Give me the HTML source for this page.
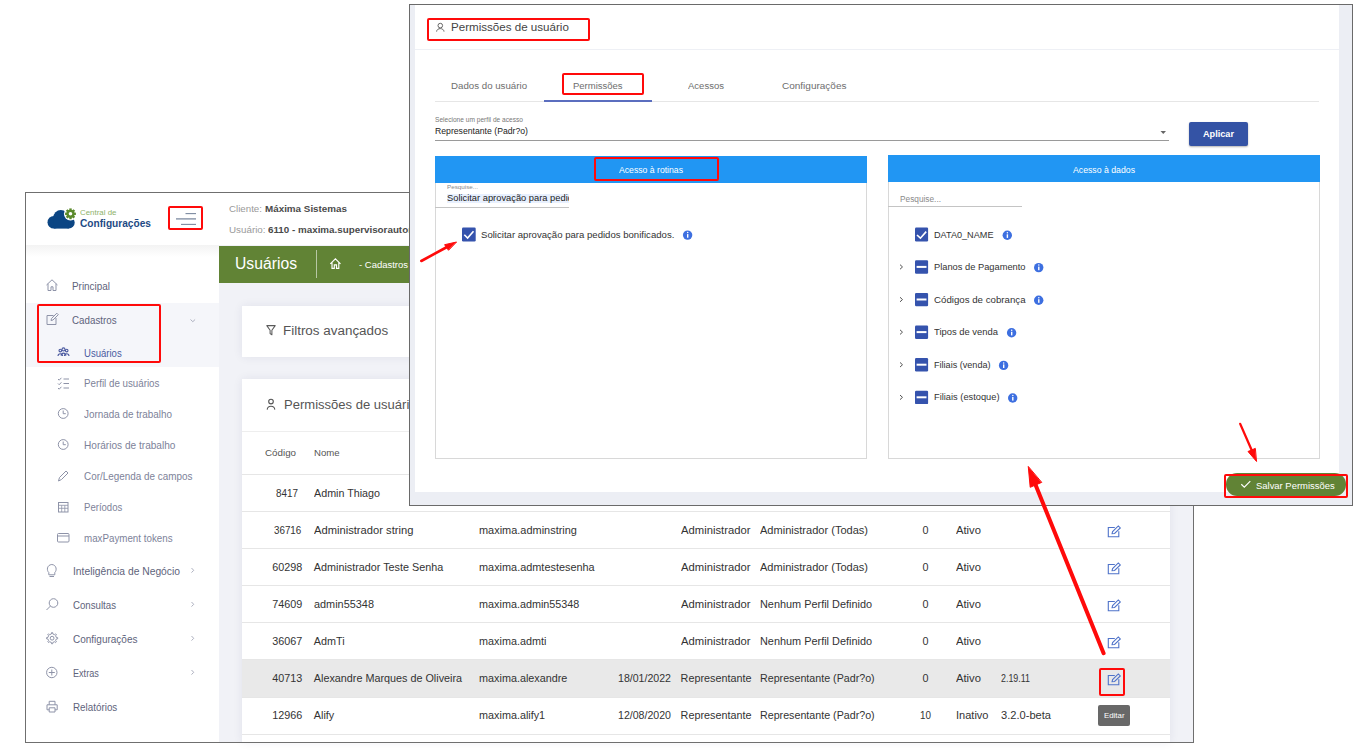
<!DOCTYPE html>
<html><head><meta charset="utf-8"><style>
*{margin:0;padding:0;box-sizing:border-box}
html,body{width:1362px;height:752px;overflow:hidden;background:#fff;font-family:"Liberation Sans",sans-serif}
.a{position:absolute}
.tx{position:absolute;white-space:nowrap;line-height:normal;transform-origin:0 0;font-family:"Liberation Sans",sans-serif}
.red{position:absolute;border:2.9px solid #ff0a0a;border-radius:2px}
svg{position:absolute;overflow:visible}
</style></head><body>
<!-- ================= BACK APP ================= -->
<div class="a" style="left:25px;top:192px;width:1169px;height:551px;border:1px solid #6f6f6f;background:#fff;overflow:hidden">
</div>
<!-- sidebar shadow -->
<div class="a" style="left:26px;top:245px;width:193px;height:12px;background:linear-gradient(#f3f3f3,#fff)"></div>
<div class="a" style="left:26px;top:302.5px;width:193px;height:64.5px;background:#f5f6fa"></div>
<!-- content bg -->
<div class="a" style="left:219px;top:245px;width:974px;height:497px;background:#f1f2f7"></div>
<!-- green header -->
<div class="a" style="left:219px;top:245.7px;width:974px;height:37px;background:#618335"></div>
<div class="a" style="left:316px;top:249.5px;width:1px;height:28.5px;background:rgba(255,255,255,.55)"></div>
<!-- cards -->
<div class="a" style="left:242px;top:305.7px;width:928px;height:51px;background:#fff;box-shadow:0 0 9px rgba(40,40,90,.08)"></div>
<div class="a" style="left:242px;top:379.4px;width:928px;height:363px;background:#fff;box-shadow:0 0 9px rgba(40,40,90,.08)"></div>
<div class="a" style="left:242px;top:430.5px;width:928px;height:1px;background:#eeeeee"></div>
<div class="a" style="left:242px;top:660px;width:928px;height:37px;background:#e9e9e9"></div>
<div id="rowlines"></div>
<div class="a" style="left:242px;top:473.9px;width:928px;height:1px;background:#e6e6e6"></div>
<div class="a" style="left:242px;top:510.8px;width:928px;height:1px;background:#e6e6e6"></div>
<div class="a" style="left:242px;top:547.9px;width:928px;height:1px;background:#e6e6e6"></div>
<div class="a" style="left:242px;top:584.8px;width:928px;height:1px;background:#e6e6e6"></div>
<div class="a" style="left:242px;top:621.8px;width:928px;height:1px;background:#e6e6e6"></div>
<div class="a" style="left:242px;top:658.9px;width:928px;height:1px;background:#e6e6e6"></div>
<div class="a" style="left:242px;top:696.5px;width:928px;height:1px;background:#e6e6e6"></div>
<div class="a" style="left:242px;top:734.2px;width:928px;height:1px;background:#e6e6e6"></div>

<!-- bottom border re-draw -->
<div class="a" style="left:25px;top:742px;width:1169px;height:1px;background:#6f6f6f"></div>
<div class="a" style="left:1193px;top:192px;width:1px;height:551px;background:#6f6f6f"></div>

<!-- logo -->
<svg style="left:0;top:0" width="1362" height="752">
  <g fill="#0b4583">
    <circle cx="53.8" cy="222.3" r="6.3"/><circle cx="60.8" cy="217.6" r="7.5"/><circle cx="68.8" cy="222.7" r="5.9"/>
    <rect x="53.8" y="218" width="15" height="10.6"/>
  </g>
  <g transform="translate(70.5 213.8)">
    <circle r="6.6" fill="#fff"/>
    <circle r="4.1" fill="#5b8a2b"/>
    <g fill="#5b8a2b">
      <rect x="-1.2" y="-5.4" width="2.4" height="10.8"/>
      <rect x="-1.2" y="-5.4" width="2.4" height="10.8" transform="rotate(45)"/>
      <rect x="-1.2" y="-5.4" width="2.4" height="10.8" transform="rotate(90)"/>
      <rect x="-1.2" y="-5.4" width="2.4" height="10.8" transform="rotate(135)"/>
    </g>
    <circle r="1.8" fill="#fff"/>
  </g>
  <!-- hamburger -->
  <g stroke="#7c8aa0" stroke-width="1.1">
    <line x1="185.5" y1="213.6" x2="196" y2="213.6"/>
    <line x1="176" y1="218.9" x2="196" y2="218.9" stroke-width="1.3"/>
    <line x1="181" y1="224.4" x2="196" y2="224.4"/>
  </g>
  <!-- sidebar icons -->
  <g fill="none" stroke="#8e93a8" stroke-width="1">
    <!-- home -->
    <path d="M46.5 285 L52 279.8 L57.5 285 M48 283.8 V290.5 H51 V286.8 H53 V290.5 H56 V283.8"/>
    <!-- edit -->
    <path d="M53.5 315.5 H47 V324.5 H56 V318"/>
    <path d="M51 320.5 L51.5 318.5 L56.8 313.2 L58.3 314.7 L53 320 Z"/>
    <!-- checklist -->
    <path d="M58 379 l1.2 1.2 l2.2 -2.4 M58 383.5 l1.2 1.2 l2.2 -2.4 M58 388 l1.2 1.2 l2.2 -2.4 M63.5 379 H69 M63.5 383.5 H69 M63.5 388 H69"/>
    <!-- clocks -->
    <circle cx="63.2" cy="413.5" r="4.9"/><path d="M63.2 410.5 V413.7 H65.8"/>
    <circle cx="63.2" cy="444.5" r="4.9"/><path d="M63.2 441.5 V444.7 H65.8"/>
    <!-- pencil -->
    <path d="M58.5 481 L59.5 477.5 L66 471 L68 473 L61.5 479.5 Z"/>
    <!-- calendar -->
    <rect x="58.5" y="502.5" width="9.5" height="9.5"/>
    <path d="M58.5 505.3 H68 M58.5 508.3 H68 M61.7 505.3 V512 M64.8 505.3 V512" stroke-width=".8"/>
    <!-- card -->
    <rect x="57.5" y="533.5" width="11.5" height="8.5" rx="1"/>
    <path d="M57.5 536 H69"/>
    <!-- bulb -->
    <path d="M48.8 572.5 C46.5 570.5 46.7 565 51.8 564.5 C56.8 565 57 570.5 54.8 572.5 V574.8 H48.8 Z M49.5 576.5 H54"/>
    <!-- search -->
    <circle cx="53.5" cy="603" r="4.3"/><path d="M50.5 606 L46.5 610"/>
    <!-- gear -->
    <circle cx="52.1" cy="638.2" r="1.9"/>
    <path d="M56.34 637.46 L57.68 637.67 L57.68 638.73 L56.34 638.94 L55.62 640.67 L56.41 641.77 L55.67 642.51 L54.57 641.72 L52.84 642.44 L52.63 643.78 L51.57 643.78 L51.36 642.44 L49.63 641.72 L48.53 642.51 L47.79 641.77 L48.58 640.67 L47.86 638.94 L46.52 638.73 L46.52 637.67 L47.86 637.46 L48.58 635.73 L47.79 634.63 L48.53 633.89 L49.63 634.68 L51.36 633.96 L51.57 632.62 L52.63 632.62 L52.84 633.96 L54.57 634.68 L55.67 633.89 L56.41 634.63 L55.62 635.73 Z"/>
    <!-- plus circle -->
    <circle cx="51.8" cy="672.5" r="5.2"/><path d="M51.8 669.5 V675.5 M48.8 672.5 H54.8"/>
    <!-- printer -->
    <path d="M49.2 704.8 V701.3 H55 V704.8 M49.2 709.8 H47 V704.8 H57.2 V709.8 H55 M49.2 707.8 H55 V712 H49.2 Z"/>
    <!-- chevrons -->
    <path d="M190.5 319.5 l2.3 2.2 2.3 -2.2" stroke="#aeb1c0"/>
    <path d="M191.5 568 l2.2 2.3 -2.2 2.3 M191.5 602 l2.2 2.3 -2.2 2.3 M191.5 636 l2.2 2.3 -2.2 2.3 M191.5 670 l2.2 2.3 -2.2 2.3" stroke="#aeb1c0"/>
  </g>
  <!-- users icon -->
  <g fill="none" stroke="#4b5aa0" stroke-width="1.1">
    <circle cx="60.3" cy="350.6" r="1.3"/><circle cx="63.5" cy="349.4" r="1.5"/><circle cx="66.7" cy="350.6" r="1.3"/>
    <path d="M58 356 C58.2 353 62.4 353 62.6 356 M61.2 355.8 C61.4 352.2 65.6 352.2 65.8 355.8 M64.4 356 C64.6 353 68.8 353 69 356"/>
  </g>
  <!-- header icons -->
  <path d="M330.3 263.8 L335.4 258.8 L340.5 263.8 M332 262.3 V268.4 H334.3 V264.8 H336.5 V268.4 H338.8 V262.3" fill="none" stroke="#fff" stroke-width="1.15"/>
  <!-- filter icon -->
  <path d="M266.8 325.6 H275.2 L271.9 330.2 V334.8 L270.1 333.6 V330.2 Z" fill="none" stroke="#5a5a5a" stroke-width="1.05" stroke-linejoin="round"/>
  <!-- user icon card -->
  <g fill="none" stroke="#555" stroke-width="1.1">
    <circle cx="271" cy="401.6" r="2.3"/><path d="M267.2 409.6 C267.6 405.2 274.4 405.2 274.8 409.6"/>
  </g>
</svg>
<svg style="left:0;top:0" width="1362" height="752"><g fill="none" stroke="#4f73c9" stroke-width="1.1"><path d="M1114.8 527.5 H1108.3 V536.7 H1118.8 V531.2"/><path d="M1112.1 533.7 L1112.6 531.5 L1118.3 525.9000000000001 L1120.3 527.9000000000001 L1114.6 533.5 Z"/><path d="M1114.8 564.5 H1108.3 V573.7 H1118.8 V568.2"/><path d="M1112.1 570.7 L1112.6 568.5 L1118.3 562.9000000000001 L1120.3 564.9000000000001 L1114.6 570.5 Z"/><path d="M1114.8 601.5 H1108.3 V610.7 H1118.8 V605.2"/><path d="M1112.1 607.7 L1112.6 605.5 L1118.3 599.9000000000001 L1120.3 601.9000000000001 L1114.6 607.5 Z"/><path d="M1114.8 638.5 H1108.3 V647.7 H1118.8 V642.2"/><path d="M1112.1 644.7 L1112.6 642.5 L1118.3 636.9000000000001 L1120.3 638.9000000000001 L1114.6 644.5 Z"/><path d="M1114.8 675.5 H1108.3 V684.7 H1118.8 V679.2"/><path d="M1112.1 681.7 L1112.6 679.5 L1118.3 673.9000000000001 L1120.3 675.9000000000001 L1114.6 681.5 Z"/><path d="M1114.8 712.5 H1108.3 V721.7 H1118.8 V716.2"/><path d="M1112.1 718.7 L1112.6 716.5 L1118.3 710.9000000000001 L1120.3 712.9000000000001 L1114.6 718.5 Z"/></g></svg>
<!-- tooltip -->
<div class="a" style="left:1097.7px;top:705.2px;width:32.8px;height:20.4px;background:#686868;border-radius:2px"></div>

<span class="tx" style="left:80.00px;top:208.45px;font-size:7.9px;color:#8db26a;font-weight:400;">Central de</span>
<span class="tx" style="left:80.00px;top:216.83px;font-size:10.8px;color:#1d4a84;font-weight:700;transform:scaleX(0.939);">Configurações</span>
<span class="tx" style="left:229.20px;top:204.45px;font-size:9px;color:#9a9a9a;font-weight:400;transform:scaleX(1.081);">Cliente:</span>
<span class="tx" style="left:265.00px;top:204.45px;font-size:9px;color:#4a4a4a;font-weight:700;transform:scaleX(1.093);">Máxima Sistemas</span>
<span class="tx" style="left:229.20px;top:224.55px;font-size:9px;color:#9a9a9a;font-weight:400;transform:scaleX(1.089);">Usuário:</span>
<span class="tx" style="left:268.20px;top:224.55px;font-size:9px;color:#4a4a4a;font-weight:700;transform:scaleX(1.090);">6110 - maxima.supervisorautomatico</span>
<span class="tx" style="left:234.80px;top:255.08px;font-size:15.6px;color:#ffffff;font-weight:400;transform:scaleX(1.008);">Usuários</span>
<span class="tx" style="left:358.90px;top:259.11px;font-size:9.6px;color:#ffffff;font-weight:400;transform:scaleX(0.988);">- Cadastros</span>
<span class="tx" style="left:72.10px;top:280.30px;font-size:10.5px;color:#5e637b;font-weight:400;transform:scaleX(0.943);">Principal</span>
<span class="tx" style="left:72.00px;top:314.40px;font-size:10.5px;color:#5e637b;font-weight:400;transform:scaleX(0.932);">Cadastros</span>
<span class="tx" style="left:83.80px;top:347.00px;font-size:10.5px;color:#4b5aa0;font-weight:400;transform:scaleX(0.910);">Usuários</span>
<span class="tx" style="left:83.60px;top:378.08px;font-size:10.3px;color:#7d8299;font-weight:400;transform:scaleX(0.948);">Perfil de usuários</span>
<span class="tx" style="left:83.60px;top:408.98px;font-size:10.3px;color:#7d8299;font-weight:400;transform:scaleX(0.961);">Jornada de trabalho</span>
<span class="tx" style="left:83.60px;top:439.88px;font-size:10.3px;color:#7d8299;font-weight:400;transform:scaleX(0.980);">Horários de trabalho</span>
<span class="tx" style="left:83.60px;top:470.78px;font-size:10.3px;color:#7d8299;font-weight:400;transform:scaleX(0.961);">Cor/Legenda de campos</span>
<span class="tx" style="left:83.60px;top:501.68px;font-size:10.3px;color:#7d8299;font-weight:400;transform:scaleX(0.929);">Períodos</span>
<span class="tx" style="left:83.60px;top:532.58px;font-size:10.3px;color:#7d8299;font-weight:400;transform:scaleX(0.949);">maxPayment tokens</span>
<span class="tx" style="left:72.50px;top:564.70px;font-size:10.5px;color:#5e637b;font-weight:400;transform:scaleX(0.980);">Inteligência de Negócio</span>
<span class="tx" style="left:72.50px;top:598.70px;font-size:10.5px;color:#5e637b;font-weight:400;transform:scaleX(0.921);">Consultas</span>
<span class="tx" style="left:72.50px;top:632.70px;font-size:10.5px;color:#5e637b;font-weight:400;transform:scaleX(0.952);">Configurações</span>
<span class="tx" style="left:72.50px;top:666.70px;font-size:10.5px;color:#5e637b;font-weight:400;transform:scaleX(0.867);">Extras</span>
<span class="tx" style="left:72.50px;top:700.70px;font-size:10.5px;color:#5e637b;font-weight:400;transform:scaleX(0.937);">Relatórios</span>
<span class="tx" style="left:283.20px;top:322.60px;font-size:13.7px;color:#555555;font-weight:400;transform:scaleX(0.981);">Filtros avançados</span>
<span class="tx" style="left:283.60px;top:397.10px;font-size:13.7px;color:#555555;font-weight:400;transform:scaleX(0.952);">Permissões de usuário</span>
<span class="tx" style="left:265.00px;top:446.51px;font-size:9.6px;color:#555555;font-weight:400;transform:scaleX(1.020);">Código</span>
<span class="tx" style="left:314.00px;top:446.51px;font-size:9.6px;color:#555555;font-weight:400;">Nome</span>
<span class="tx" style="left:276.20px;top:487.23px;font-size:10.8px;color:#333333;font-weight:400;transform:scaleX(0.915);">8417</span>
<span class="tx" style="left:313.80px;top:487.23px;font-size:10.8px;color:#333333;font-weight:400;transform:scaleX(0.994);">Admin Thiago</span>
<span class="tx" style="left:273.55px;top:524.23px;font-size:10.8px;color:#333333;font-weight:400;transform:scaleX(0.909);">36716</span>
<span class="tx" style="left:313.80px;top:524.23px;font-size:10.8px;color:#333333;font-weight:400;transform:scaleX(1.035);">Administrador string</span>
<span class="tx" style="left:479.10px;top:524.23px;font-size:10.8px;color:#333333;font-weight:400;transform:scaleX(1.014);">maxima.adminstring</span>
<span class="tx" style="left:680.60px;top:524.23px;font-size:10.8px;color:#333333;font-weight:400;transform:scaleX(1.042);">Administrador</span>
<span class="tx" style="left:760.10px;top:524.23px;font-size:10.8px;color:#333333;font-weight:400;transform:scaleX(1.023);">Administrador (Todas)</span>
<span class="tx" style="left:922.49px;top:524.23px;font-size:10.8px;color:#333333;font-weight:400;">0</span>
<span class="tx" style="left:955.60px;top:524.23px;font-size:10.8px;color:#333333;font-weight:400;transform:scaleX(1.041);">Ativo</span>
<span class="tx" style="left:272.20px;top:561.23px;font-size:10.8px;color:#333333;font-weight:400;">60298</span>
<span class="tx" style="left:313.80px;top:561.23px;font-size:10.8px;color:#333333;font-weight:400;">Administrador Teste Senha</span>
<span class="tx" style="left:479.10px;top:561.23px;font-size:10.8px;color:#333333;font-weight:400;transform:scaleX(1.009);">maxima.admtestesenha</span>
<span class="tx" style="left:680.60px;top:561.23px;font-size:10.8px;color:#333333;font-weight:400;transform:scaleX(1.042);">Administrador</span>
<span class="tx" style="left:760.10px;top:561.23px;font-size:10.8px;color:#333333;font-weight:400;transform:scaleX(1.023);">Administrador (Todas)</span>
<span class="tx" style="left:922.49px;top:561.23px;font-size:10.8px;color:#333333;font-weight:400;">0</span>
<span class="tx" style="left:955.60px;top:561.23px;font-size:10.8px;color:#333333;font-weight:400;transform:scaleX(1.041);">Ativo</span>
<span class="tx" style="left:272.18px;top:598.23px;font-size:10.8px;color:#333333;font-weight:400;">74609</span>
<span class="tx" style="left:313.80px;top:598.23px;font-size:10.8px;color:#333333;font-weight:400;transform:scaleX(1.009);">admin55348</span>
<span class="tx" style="left:479.10px;top:598.23px;font-size:10.8px;color:#333333;font-weight:400;">maxima.admin55348</span>
<span class="tx" style="left:680.60px;top:598.23px;font-size:10.8px;color:#333333;font-weight:400;transform:scaleX(1.042);">Administrador</span>
<span class="tx" style="left:760.10px;top:598.23px;font-size:10.8px;color:#333333;font-weight:400;transform:scaleX(1.009);">Nenhum Perfil Definido</span>
<span class="tx" style="left:922.49px;top:598.23px;font-size:10.8px;color:#333333;font-weight:400;">0</span>
<span class="tx" style="left:955.60px;top:598.23px;font-size:10.8px;color:#333333;font-weight:400;transform:scaleX(1.041);">Ativo</span>
<span class="tx" style="left:272.18px;top:635.23px;font-size:10.8px;color:#333333;font-weight:400;">36067</span>
<span class="tx" style="left:313.80px;top:635.23px;font-size:10.8px;color:#333333;font-weight:400;">AdmTi</span>
<span class="tx" style="left:479.10px;top:635.23px;font-size:10.8px;color:#333333;font-weight:400;">maxima.admti</span>
<span class="tx" style="left:680.60px;top:635.23px;font-size:10.8px;color:#333333;font-weight:400;transform:scaleX(1.042);">Administrador</span>
<span class="tx" style="left:760.10px;top:635.23px;font-size:10.8px;color:#333333;font-weight:400;transform:scaleX(1.009);">Nenhum Perfil Definido</span>
<span class="tx" style="left:922.49px;top:635.23px;font-size:10.8px;color:#333333;font-weight:400;">0</span>
<span class="tx" style="left:955.60px;top:635.23px;font-size:10.8px;color:#333333;font-weight:400;transform:scaleX(1.041);">Ativo</span>
<span class="tx" style="left:272.18px;top:672.23px;font-size:10.8px;color:#333333;font-weight:400;">40713</span>
<span class="tx" style="left:313.80px;top:672.23px;font-size:10.8px;color:#333333;font-weight:400;">Alexandre Marques de Oliveira</span>
<span class="tx" style="left:479.10px;top:672.23px;font-size:10.8px;color:#333333;font-weight:400;">maxima.alexandre</span>
<span class="tx" style="left:617.50px;top:672.23px;font-size:10.8px;color:#333333;font-weight:400;transform:scaleX(0.981);">18/01/2022</span>
<span class="tx" style="left:680.60px;top:672.23px;font-size:10.8px;color:#333333;font-weight:400;">Representante</span>
<span class="tx" style="left:760.10px;top:672.23px;font-size:10.8px;color:#333333;font-weight:400;transform:scaleX(0.990);">Representante (Padr?o)</span>
<span class="tx" style="left:922.49px;top:672.23px;font-size:10.8px;color:#333333;font-weight:400;">0</span>
<span class="tx" style="left:955.60px;top:672.23px;font-size:10.8px;color:#333333;font-weight:400;transform:scaleX(1.041);">Ativo</span>
<span class="tx" style="left:1000.80px;top:672.23px;font-size:10.8px;color:#333333;font-weight:400;transform:scaleX(0.823);">2.19.11</span>
<span class="tx" style="left:272.18px;top:709.23px;font-size:10.8px;color:#333333;font-weight:400;">12966</span>
<span class="tx" style="left:313.80px;top:709.23px;font-size:10.8px;color:#333333;font-weight:400;">Alify</span>
<span class="tx" style="left:479.10px;top:709.23px;font-size:10.8px;color:#333333;font-weight:400;">maxima.alify1</span>
<span class="tx" style="left:617.50px;top:709.23px;font-size:10.8px;color:#333333;font-weight:400;transform:scaleX(0.981);">12/08/2020</span>
<span class="tx" style="left:680.60px;top:709.23px;font-size:10.8px;color:#333333;font-weight:400;">Representante</span>
<span class="tx" style="left:760.10px;top:709.23px;font-size:10.8px;color:#333333;font-weight:400;transform:scaleX(0.990);">Representante (Padr?o)</span>
<span class="tx" style="left:920.00px;top:709.23px;font-size:10.8px;color:#333333;font-weight:400;transform:scaleX(0.915);">10</span>
<span class="tx" style="left:955.60px;top:709.23px;font-size:10.8px;color:#333333;font-weight:400;transform:scaleX(1.022);">Inativo</span>
<span class="tx" style="left:1000.80px;top:709.23px;font-size:10.8px;color:#333333;font-weight:400;transform:scaleX(1.028);">3.2.0-beta</span>
<span class="tx" style="left:1103.75px;top:711.05px;font-size:7.9px;color:#ffffff;font-weight:400;transform:scaleX(0.994);">Editar</span>
<!-- ================= MODAL ================= -->
<div class="a" style="left:409px;top:4px;width:944px;height:502px;border:1px solid #6a6a6a;background:#eceef4"></div>
<div class="a" style="left:415px;top:5px;width:924px;height:487px;background:#fff"></div>
<div class="a" style="left:415px;top:49px;width:924px;height:1px;background:#eef0f5"></div>
<!-- tabs underline -->
<div class="a" style="left:434.7px;top:101.2px;width:884.5px;height:1px;background:#e6e6e6"></div>
<div class="a" style="left:543.6px;top:99.8px;width:108px;height:2px;background:#5b6ebf"></div>
<!-- select underline -->
<div class="a" style="left:434.7px;top:140px;width:734px;height:1px;background:#9a9a9a"></div>
<svg style="left:0;top:0" width="1362" height="752">
  <path d="M1160.5 131 H1166 L1163.25 134 Z" fill="#666"/>
</svg>
<div class="a" style="left:1189.2px;top:121.5px;width:59px;height:24.5px;background:#3453a5;border-radius:2px;box-shadow:0 1px 2px rgba(0,0,0,.3)"></div>
<!-- panels -->
<div class="a" style="left:434.5px;top:155.5px;width:432px;height:303.5px;border:1px solid #d8d8d8;background:#fff"></div>
<div class="a" style="left:434.5px;top:155.5px;width:432px;height:27px;background:#2196f3"></div>
<div class="a" style="left:887.5px;top:155.2px;width:432.2px;height:304px;border:1px solid #d8d8d8;background:#fff"></div>
<div class="a" style="left:887.5px;top:155.2px;width:432.2px;height:27px;background:#2196f3"></div>
<!-- left search -->
<div class="a" style="left:447px;top:193.7px;width:122.3px;height:9.5px;background:#e8f0fe"></div>
<div class="a" style="left:435px;top:206.5px;width:134.3px;height:1px;background:#c4c4c4"></div>
<div class="a" style="left:888px;top:206.2px;width:133.7px;height:1px;background:#c4c4c4"></div>
<!-- checkboxes -->
<svg style="left:0;top:0" width="1362" height="752">
  <rect x="462" y="227.5" width="13.7" height="13.9" rx="1.2" fill="#3553ad"/>
  <path d="M464.3 234.8 L467.6 238 L473.5 231.3" fill="none" stroke="#fff" stroke-width="1.6"/>
  <rect x="915" y="227.6" width="13.1" height="13.8" rx="1.2" fill="#3553ad"/>
  <path d="M917 235 L920.4 238.2 L926.2 231.6" fill="none" stroke="#fff" stroke-width="1.6"/>
  <path d="M900 264.65 L902.5 266.95 L900 269.25" fill="none" stroke="#555" stroke-width="1"/><rect x="915" y="260.3" width="13.1" height="13.4" rx="1.2" fill="#3553ad"/><rect x="916.6" y="265.9" width="9.9" height="2" fill="#fff"/><circle cx="1038.7" cy="267.6" r="4.7" fill="#3d6fe0"/><rect x="1038.1" y="266.6" width="1.4" height="3.6" fill="#fff"/><circle cx="1038.8" cy="265.1" r="0.75" fill="#fff"/><path d="M900 297.25 L902.5 299.55 L900 301.85" fill="none" stroke="#555" stroke-width="1"/><rect x="915" y="292.9" width="13.1" height="13.4" rx="1.2" fill="#3553ad"/><rect x="916.6" y="298.5" width="9.9" height="2" fill="#fff"/><circle cx="1038.7" cy="300.2" r="4.7" fill="#3d6fe0"/><rect x="1038.1" y="299.2" width="1.4" height="3.6" fill="#fff"/><circle cx="1038.8" cy="297.7" r="0.75" fill="#fff"/><path d="M900 329.84999999999997 L902.5 332.15 L900 334.45" fill="none" stroke="#555" stroke-width="1"/><rect x="915" y="325.5" width="13.1" height="13.4" rx="1.2" fill="#3553ad"/><rect x="916.6" y="331.1" width="9.9" height="2" fill="#fff"/><circle cx="1011.6" cy="332.8" r="4.7" fill="#3d6fe0"/><rect x="1011.0" y="331.8" width="1.4" height="3.6" fill="#fff"/><circle cx="1011.7" cy="330.3" r="0.75" fill="#fff"/><path d="M900 362.45 L902.5 364.75 L900 367.05" fill="none" stroke="#555" stroke-width="1"/><rect x="915" y="358.1" width="13.1" height="13.4" rx="1.2" fill="#3553ad"/><rect x="916.6" y="363.7" width="9.9" height="2" fill="#fff"/><circle cx="1003.6" cy="365.4" r="4.7" fill="#3d6fe0"/><rect x="1003.0" y="364.4" width="1.4" height="3.6" fill="#fff"/><circle cx="1003.7" cy="362.9" r="0.75" fill="#fff"/><path d="M900 395.05 L902.5 397.35 L900 399.65000000000003" fill="none" stroke="#555" stroke-width="1"/><rect x="915" y="390.7" width="13.1" height="13.4" rx="1.2" fill="#3553ad"/><rect x="916.6" y="396.3" width="9.9" height="2" fill="#fff"/><circle cx="1012.7" cy="398.0" r="4.7" fill="#3d6fe0"/><rect x="1012.1" y="397.0" width="1.4" height="3.6" fill="#fff"/><circle cx="1012.8" cy="395.5" r="0.75" fill="#fff"/><circle cx="687.6" cy="235.1" r="4.7" fill="#3d6fe0"/><rect x="687.0" y="234.1" width="1.4" height="3.6" fill="#fff"/><circle cx="687.7" cy="232.6" r="0.75" fill="#fff"/><circle cx="1007.3" cy="235.3" r="4.7" fill="#3d6fe0"/><rect x="1006.7" y="234.3" width="1.4" height="3.6" fill="#fff"/><circle cx="1007.4" cy="232.8" r="0.75" fill="#fff"/>
</svg>
<svg style="left:0;top:0" width="1362" height="752"><g fill="none" stroke="#666" stroke-width="1">
  <circle cx="440.3" cy="25.6" r="2.3"/><path d="M436.6 31.6 C436.8 27.6 443.8 27.6 444 31.6"/></g></svg>
<!-- salvar button -->
<div class="a" style="left:1226.3px;top:473.2px;width:120px;height:22.4px;background:#618335;border-radius:11.2px"></div>
<svg style="left:0;top:0" width="1362" height="752">
  <path d="M1241.3 484.3 L1244.3 487.2 L1250.3 481.2" fill="none" stroke="#fff" stroke-width="1.2"/>
</svg>
<!-- ================= TEXT ================= -->
<div class="a" style="left:447px;top:192px;width:122.3px;height:13px;overflow:hidden"><span class="tx2" style="position:absolute;white-space:nowrap;transform-origin:0 0;left:0;top:1.2px;font-size:8.9px;color:#222;transform:scaleX(1.05)">Solicitar aprovação para pedidos bonificados</span></div>
<span class="tx" style="left:451.20px;top:20.22px;font-size:11.8px;color:#444444;font-weight:400;transform:scaleX(0.982);">Permissões de usuário</span>
<span class="tx" style="left:451.20px;top:79.91px;font-size:9.6px;color:#6e6e6e;font-weight:400;transform:scaleX(1.011);">Dados do usuário</span>
<span class="tx" style="left:572.80px;top:79.91px;font-size:9.6px;color:#6e6e6e;font-weight:400;transform:scaleX(0.990);">Permissões</span>
<span class="tx" style="left:687.80px;top:79.91px;font-size:9.6px;color:#6e6e6e;font-weight:400;transform:scaleX(0.993);">Acessos</span>
<span class="tx" style="left:781.70px;top:79.91px;font-size:9.6px;color:#6e6e6e;font-weight:400;transform:scaleX(1.042);">Configurações</span>
<span class="tx" style="left:434.70px;top:115.50px;font-size:6.3px;color:#777777;font-weight:400;transform:scaleX(1.047);">Selecione um perfil de acesso</span>
<span class="tx" style="left:434.70px;top:126.34px;font-size:8.8px;color:#222222;font-weight:400;transform:scaleX(0.985);">Representante (Padr?o)</span>
<span class="tx" style="left:618.60px;top:165.32px;font-size:8.6px;color:#ffffff;font-weight:400;transform:scaleX(1.007);">Acesso à rotinas</span>
<span class="tx" style="left:1072.50px;top:165.32px;font-size:8.6px;color:#ffffff;font-weight:400;transform:scaleX(1.014);">Acesso à dados</span>
<span class="tx" style="left:447.00px;top:183.09px;font-size:6.2px;color:#888888;font-weight:400;transform:scaleX(1.012);">Pesquise...</span>
<span class="tx" style="left:900.00px;top:194.20px;font-size:8.4px;color:#8a8a8a;font-weight:400;transform:scaleX(0.989);">Pesquise...</span>
<span class="tx" style="left:481.20px;top:229.29px;font-size:9.4px;color:#333333;font-weight:400;transform:scaleX(1.022);">Solicitar aprovação para pedidos bonificados.</span>
<span class="tx" style="left:1203.10px;top:129.17px;font-size:9.2px;color:#ffffff;font-weight:700;transform:scaleX(0.995);">Aplicar</span>
<span class="tx" style="left:933.80px;top:230.14px;font-size:8.8px;color:#333333;font-weight:400;transform:scaleX(1.037);">DATA0_NAME</span>
<span class="tx" style="left:933.60px;top:261.94px;font-size:8.8px;color:#333333;font-weight:400;transform:scaleX(1.057);">Planos de Pagamento</span>
<span class="tx" style="left:933.60px;top:294.54px;font-size:8.8px;color:#333333;font-weight:400;transform:scaleX(1.101);">Códigos de cobrança</span>
<span class="tx" style="left:933.60px;top:327.14px;font-size:8.8px;color:#333333;font-weight:400;transform:scaleX(1.070);">Tipos de venda</span>
<span class="tx" style="left:933.60px;top:359.74px;font-size:8.8px;color:#333333;font-weight:400;transform:scaleX(1.032);">Filiais (venda)</span>
<span class="tx" style="left:933.60px;top:392.34px;font-size:8.8px;color:#333333;font-weight:400;transform:scaleX(1.055);">Filiais (estoque)</span>
<span class="tx" style="left:1256.00px;top:479.61px;font-size:9.6px;color:#ffffff;font-weight:400;transform:scaleX(0.983);">Salvar Permissões</span>
<!-- ================= ANNOTATIONS ================= -->
<div class="red" style="left:167.8px;top:205.5px;width:35.4px;height:24.5px"></div>
<div class="red" style="left:37.1px;top:304.3px;width:123.9px;height:58.5px"></div>
<div class="red" style="left:426.7px;top:17.8px;width:163.6px;height:22.9px"></div>
<div class="red" style="left:561.9px;top:73.1px;width:81.9px;height:22px"></div>
<div class="red" style="left:593.9px;top:157px;width:125px;height:23.6px"></div>
<div class="red" style="left:1224.1px;top:474.4px;width:124.4px;height:23.4px"></div>
<div class="red" style="left:1099.2px;top:667.8px;width:26.2px;height:28.5px"></div>
<svg style="left:0;top:0" width="1362" height="752">
  <g stroke="#ff0a0a" stroke-linecap="round" fill="#ff0a0a">
    <line x1="421.3" y1="261" x2="447" y2="247" stroke-width="2.6"/>
    <path d="M456.2 242.1 L444.6 244.7 L448.3 250 Z" stroke-width="1"/>
    <line x1="1240.2" y1="423.9" x2="1252.5" y2="452" stroke-width="2.3"/>
    <path d="M1256.3 461.2 L1248 451.5 L1255 448.5 Z" stroke-width="1"/>
    <line x1="1103.6" y1="653.2" x2="1034" y2="481" stroke-width="4"/>
    <path d="M1028.3 466.8 L1030.2 487.3 L1041.4 482.5 Z" stroke-width="1"/>
  </g>
</svg>
</body></html>
